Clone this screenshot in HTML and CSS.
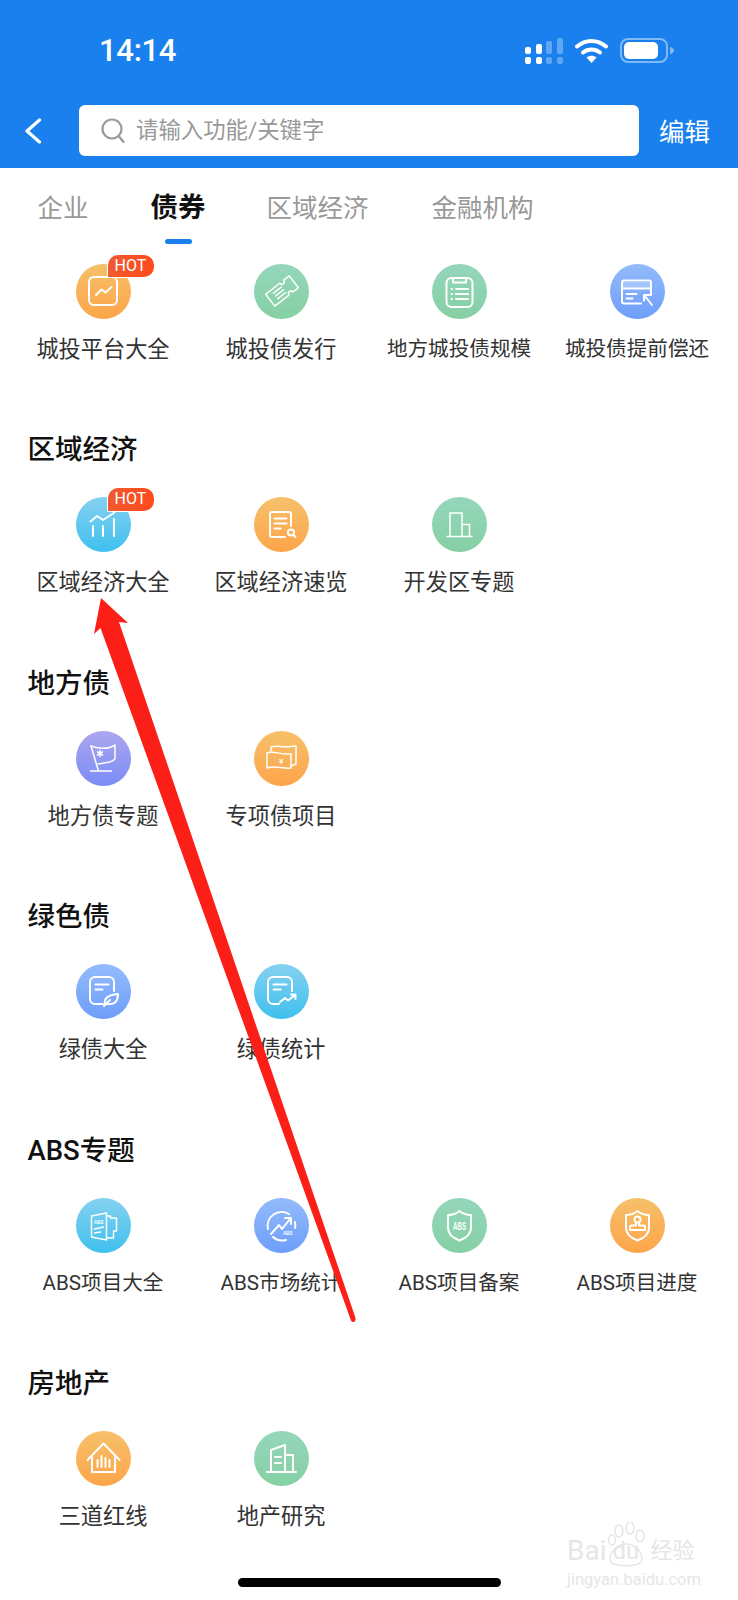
FILE: index.html
```html
<!DOCTYPE html>
<html lang="en">
<head>
  <meta charset="UTF-8">
  <meta name="viewport" content="width=device-width, initial-scale=1.0">
  <title>债券</title>
  <link rel="stylesheet" href="styles.css">
</head>
<body>

<div class="page">
  <header class="header">
    <div class="status-bar">
      <span class="time">14:14</span>
      <div class="status-icons">
        <svg class="signal" width="38" height="26" viewBox="0 0 38 26">
          <rect x="0" y="9" width="6" height="7" rx="2" fill="#fff"/>
          <rect x="0" y="19" width="6" height="7" rx="2" fill="#fff"/>
          <rect x="11" y="6" width="6" height="10" rx="2" fill="#fff"/>
          <rect x="11" y="19" width="6" height="7" rx="2" fill="#fff"/>
          <rect x="21" y="3" width="6" height="13" rx="2" fill="#fff" opacity=".3"/>
          <rect x="21" y="19" width="6" height="7" rx="2" fill="#fff" opacity=".3"/>
          <rect x="32" y="0" width="6" height="16" rx="2" fill="#fff" opacity=".3"/>
          <rect x="32" y="19" width="6" height="7" rx="2" fill="#fff" opacity=".3"/>
        </svg>
        <svg class="wifi" width="33" height="25" viewBox="0 0 33 25">
          <path d="M2 8.500C10.500 1 22.500 1 31 8.500" fill="none" stroke="#fff" stroke-width="4" stroke-linecap="round"/>
          <path d="M8 14.500C13 10.500 20 10.500 25 14.500" fill="none" stroke="#fff" stroke-width="4" stroke-linecap="round"/>
          <path d="M11.500 19.500C14.500 17 18.500 17 21.500 19.500L16.500 25Z" fill="#fff"/>
        </svg>
        <svg class="battery" width="54" height="25" viewBox="0 0 54 25">
          <rect x="1" y="1" width="46" height="23" rx="7" fill="none" stroke="#fff" stroke-opacity=".45" stroke-width="2"/>
          <rect x="4" y="4" width="34" height="17" rx="5" fill="#fff"/>
          <path d="M50 9c2.500 .5 4 2 4 3.500s-1.500 3-4 3.500z" fill="#fff" fill-opacity=".45"/>
        </svg>
      </div>
    </div>
    <div class="nav-bar">
      <svg class="back" width="18" height="26" viewBox="0 0 18 26">
        <path d="M15.500 2L3 13l12.500 11" fill="none" stroke="#fff" stroke-width="3.200" stroke-linecap="round" stroke-linejoin="round"/>
      </svg>
      <div class="search">
        <svg class="search-icon" width="25" height="27" viewBox="0 0 25 27">
          <circle cx="11" cy="12" r="9.500" fill="none" stroke="#999" stroke-width="2.200"/>
          <path d="M18.500 20l4 5" fill="none" stroke="#999" stroke-width="2.200" stroke-linecap="round"/>
        </svg>
        <span class="placeholder">请输入功能/关键字</span>
      </div>
      <span class="edit">编辑</span>
    </div>
  </header>

  <nav class="tabs">
    <span class="tab">企业</span>
    <span class="tab tab-active">债券</span>
    <span class="tab tab-wide">区域经济</span>
    <span class="tab">金融机构</span>
  </nav>

  <section class="section">
    <div class="grid">
      <div class="item">
        <div class="circle orange">
          <svg class="ico" viewBox="0 0 55 55">
            <rect x="13" y="13" width="28" height="28" rx="5"/>
            <path d="M20 31l5.500-5.500 4 3L35.500 23"/>
          </svg>
          <span class="hot">HOT</span>
        </div>
        <span class="label">城投平台大全</span>
      </div>
      <div class="item">
        <div class="circle green">
          <svg class="ico thin" viewBox="0 0 55 55">
            <g transform="rotate(-38 28 27)">
              <path d="M13 19.500h18a2.500 2.500 0 0 0 5 0h7v15h-7a2.500 2.500 0 0 0-5 0H13z"/>
              <path d="M20 23.500h10M20 27h10M20 30.500h10"/>
            </g>
          </svg>
        </div>
        <span class="label">城投债发行</span>
      </div>
      <div class="item">
        <div class="circle green">
          <svg class="ico" viewBox="0 0 55 55">
            <rect x="14.500" y="14" width="26" height="29" rx="5"/>
            <path d="M21 14v4.500h13V14"/>
            <path d="M24 25h12M24 30h12M24 35h12"/>
            <path d="M19.500 25h.5M19.500 30h.5M19.500 35h.5"/>
          </svg>
        </div>
        <span class="label small">地方城投债规模</span>
      </div>
      <div class="item">
        <div class="circle blue">
          <svg class="ico" viewBox="0 0 55 55">
            <path d="M41 31V18.500a2 2 0 0 0-2-2H14a2 2 0 0 0-2 2v19a2 2 0 0 0 2 2h17"/>
            <rect x="13" y="18" width="27" height="6" fill="#fff" fill-opacity=".25" stroke="none"/>
            <path d="M12 24.500h29M16.500 30h10M16.500 34.500h6"/>
            <path d="M34 31h5.500M34 31v5.500M34.500 31.500L42 41"/>
          </svg>
        </div>
        <span class="label small">城投债提前偿还</span>
      </div>
    </div>
  </section>

  <section class="section">
    <h3 class="section-title">区域经济</h3>
    <div class="grid">
      <div class="item">
        <div class="circle cyan">
          <svg class="ico" viewBox="0 0 55 55">
            <path d="M14.500 24.500L21 19l6 4 11.500-7.500"/>
            <path d="M17 29v10M27 29v10M38 22v17"/>
          </svg>
          <span class="hot">HOT</span>
        </div>
        <span class="label">区域经济大全</span>
      </div>
      <div class="item">
        <div class="circle orange">
          <svg class="ico" viewBox="0 0 55 55">
            <path d="M31 40H18a2 2 0 0 1-2-2V17a2 2 0 0 1 2-2h17a2 2 0 0 1 2 2v12"/>
            <path d="M20.500 21.500h12M20.500 26.500h12M20.500 31.500h6"/>
            <circle cx="37" cy="35.500" r="3"/>
            <path d="M39.500 38l2 2"/>
          </svg>
        </div>
        <span class="label">区域经济速览</span>
      </div>
      <div class="item">
        <div class="circle green">
          <svg class="ico thin" viewBox="0 0 55 55">
            <path d="M15 39.500h25M18 39.500V16h12v23.500M30 27.500h7.500v12"/>
          </svg>
        </div>
        <span class="label">开发区专题</span>
      </div>
    </div>
  </section>

  <section class="section">
    <h3 class="section-title">地方债</h3>
    <div class="grid">
      <div class="item">
        <div class="circle purple">
          <svg class="ico thin" viewBox="0 0 55 55">
            <path d="M15 15c7 2.500 16 4 24-1v14c-4 4-10 4-17 5"/>
            <path d="M15 15l7.500 25M14.500 40h21"/>
            <path d="M24 19.500v6M21.500 21l5 3M26.500 21l-5 3"/>
          </svg>
        </div>
        <span class="label">地方债专题</span>
      </div>
      <div class="item">
        <div class="circle orange">
          <svg class="ico thin" viewBox="0 0 55 55">
            <path d="M13 22c7-3 12 2 24 1v14c-9 1-16-3-24 0z"/>
            <path d="M17 20v-4c6-2 12 1 25-1v18l-5 2"/>
            <text class="yen" x="25" y="33">¥</text>
          </svg>
        </div>
        <span class="label">专项债项目</span>
      </div>
    </div>
  </section>

  <section class="section">
    <h3 class="section-title">绿色债</h3>
    <div class="grid">
      <div class="item">
        <div class="circle blue">
          <svg class="ico" viewBox="0 0 55 55">
            <path d="M27 40h-8a5 5 0 0 1-5-5V18a5 5 0 0 1 5-5h14a5 5 0 0 1 5 5v9"/>
            <path d="M19.500 20.500h13M19.500 25.500h7"/>
            <path d="M29 40c-1-6 3-9 13-10 0 7-3 11-11 10zM28 42l6-6"/>
          </svg>
        </div>
        <span class="label">绿债大全</span>
      </div>
      <div class="item">
        <div class="circle cyan">
          <svg class="ico" viewBox="0 0 55 55">
            <path d="M25 40h-6a5 5 0 0 1-5-5V18a5 5 0 0 1 5-5h14a5 5 0 0 1 5 5v9"/>
            <path d="M19.500 20.500h13M19.500 25.500h7"/>
            <path d="M26 38l5-4 3 2.500 7-5.500M37 30.500h4.500V35"/>
          </svg>
        </div>
        <span class="label">绿债统计</span>
      </div>
    </div>
  </section>

  <section class="section">
    <h3 class="section-title">ABS专题</h3>
    <div class="grid">
      <div class="item">
        <div class="circle cyan">
          <svg class="ico thin" viewBox="0 0 55 55">
            <path d="M15.500 18l15-3v27l-15-3z"/>
            <path d="M30.500 18h4v2h6v13h-3v7h-7"/>
            <path d="M18.500 31l9-2M18.500 35l6-1"/>
            <text class="abs-text" x="18" y="26" textLength="9.500" lengthAdjust="spacingAndGlyphs">ABS</text>
          </svg>
        </div>
        <span class="label small">ABS项目大全</span>
      </div>
      <div class="item">
        <div class="circle blue">
          <svg class="ico" viewBox="0 0 55 55">
            <path d="M14 31a14 14 0 0 1 21-15M41 24a14 14 0 0 1 0 6M32 42a14 14 0 0 1-13-3"/>
            <path d="M17 36l8-9 3 4 8-10M31 20h6v6"/>
            <text class="abs-text" x="29" y="37" textLength="9.500" lengthAdjust="spacingAndGlyphs">ABS</text>
          </svg>
        </div>
        <span class="label small">ABS市场统计</span>
      </div>
      <div class="item">
        <div class="circle green">
          <svg class="ico" viewBox="0 0 55 55">
            <path d="M16 17c4 0 8-1 11.500-4 3.500 3 7.500 4 11.500 4v13c0 6-5 10-11.500 12.500C21 40 16 36 16 30z"/>
            <text class="abs-big" x="21" y="31.500" textLength="13" lengthAdjust="spacingAndGlyphs">ABS</text>
          </svg>
        </div>
        <span class="label small">ABS项目备案</span>
      </div>
      <div class="item">
        <div class="circle orange">
          <svg class="ico" viewBox="0 0 55 55">
            <path d="M16 17c4 0 8-1 11.500-4 3.500 3 7.500 4 11.500 4v13c0 6-5 10-11.500 12.500C21 40 16 36 16 30z"/>
            <circle cx="27.500" cy="21.500" r="3"/>
            <path d="M26 24.500v3h-4.500a1.500 1.500 0 0 0-1.500 1.500v3h15v-3a1.500 1.500 0 0 0-1.500-1.500H29v-3"/>
          </svg>
        </div>
        <span class="label small">ABS项目进度</span>
      </div>
    </div>
  </section>

  <section class="section">
    <h3 class="section-title">房地产</h3>
    <div class="grid">
      <div class="item">
        <div class="circle orange">
          <svg class="ico" viewBox="0 0 55 55">
            <path d="M11.500 29L27.500 12.500 43.500 29"/>
            <path d="M16 26v15h23V26"/>
            <path d="M21.500 29v7M25.500 25v11M29.500 27v9M33.500 29v7"/>
          </svg>
        </div>
        <span class="label">三道红线</span>
      </div>
      <div class="item">
        <div class="circle green">
          <svg class="ico" viewBox="0 0 55 55">
            <path d="M13 41h29M17 41V19l14-5v27M31 24h8v17"/>
            <path d="M21 26h6M21 32h6"/>
          </svg>
        </div>
        <span class="label">地产研究</span>
      </div>
    </div>
  </section>

  <div class="home-bar"></div>

  <div class="watermark">
    <div class="wm-logo">
      <span>Bai</span>
      <div class="wm-paw">
        <svg width="40" height="46" viewBox="0 0 40 46">
          <g fill="none" stroke="#e6e6e6" stroke-width="1.500">
            <ellipse cx="13" cy="9" rx="4" ry="6"/>
            <ellipse cx="24" cy="6" rx="4" ry="6"/>
            <ellipse cx="34" cy="14" rx="4" ry="6"/>
            <ellipse cx="6" cy="18" rx="3.500" ry="5"/>
            <path d="M5 40c-4-9 7-18 15-18s19 9 15 18c-4 5-26 5-30 0z"/>
          </g>
        </svg>
        <span class="wm-du">du</span>
      </div>
      <span class="wm-cn">经验</span>
    </div>
    <div class="wm-url">jingyan.baidu.com</div>
  </div>

  <svg class="arrow" width="738" height="1600" viewBox="0 0 738 1600">
    <path d="M101 598L128 623 119 622 355.500 1318Q356 1322 353 1322 351 1322 350.500 1319L100.500 628 94 634Z" fill="#fb1f17"/>
  </svg>
</div>

</body>
</html>
```

FILE: styles.css
```css
* {
  box-sizing: border-box;
}

body {
  margin: 0;
  padding: 0;
  background: #fff;
  color: #333;
  font-family: Roboto, "Noto Sans CJK SC", sans-serif;
}

.page {
  position: relative;
  width: 738px;
  height: 1600px;
  overflow: hidden;
}

.header {
  height: 168px;
  background: #1a80ee;
  color: #fff;
}

.status-bar {
  height: 105px;
  padding: 0 64px 4px 99px;
  display: flex;
  align-items: center;
  justify-content: space-between;
}

.time {
  font-size: 31px;
  font-weight: 500;
  letter-spacing: -0.3px;
}

.status-icons {
  display: flex;
  align-items: center;
  gap: 12px;
}

.nav-bar {
  display: flex;
  align-items: center;
  padding-left: 24px;
}

.back {
  width: 18px;
  margin-right: 37px;
}

.search {
  width: 560px;
  height: 51px;
  padding-left: 22px;
  background: #fff;
  border-radius: 6px;
  display: flex;
  align-items: center;
  gap: 10px;
}

.placeholder {
  padding-bottom: 5px;
  color: #999;
  font-size: 22.4px;
}

.edit {
  margin-left: 20px;
  padding-top: 2px;
  font-size: 25.5px;
  line-height: 30px;
}

.tabs {
  display: flex;
  align-items: flex-start;
  gap: 62px;
  padding: 25px 0 0 37.5px;
  margin-bottom: 19.5px;
}

.tab {
  color: #999;
  font-size: 25.5px;
  line-height: 30px;
}

.tab-wide {
  margin-left: -1px;
  margin-right: 1px;
}

.tab-active {
  color: #111;
  font-size: 27.5px;
  font-weight: 700;
}

.tab-active::after {
  content: "";
  display: block;
  width: 27px;
  height: 5px;
  margin: 16px auto 0;
  background: #1a80ee;
  border-radius: 3px;
}

.section {
  margin-bottom: 68.5px;
}

.section-title {
  margin: 0 0 29px 27.5px;
  color: #111;
  font-size: 27.5px;
  font-weight: 500;
  line-height: 36px;
}

.grid {
  display: grid;
  grid-template-columns: repeat(4, 178px);
  padding-left: 14px;
}

.item {
  display: flex;
  flex-direction: column;
  align-items: center;
  gap: 15px;
}

.circle {
  position: relative;
  width: 55px;
  height: 55px;
  border-radius: 50%;
}

.orange {
  background: linear-gradient(#f6c06a, #fda54a);
}

.green {
  background: linear-gradient(#95d6bb, #85d0a4);
}

.blue {
  background: linear-gradient(#93bbfb, #6e9efa);
}

.cyan {
  background: linear-gradient(#85d1f0, #3fc0ee);
}

.purple {
  background: linear-gradient(#aca6ef, #7a8cf5);
}

.ico {
  display: block;
  width: 55px;
  height: 55px;
  fill: none;
  stroke: #fff;
  stroke-width: 2;
  stroke-linecap: round;
  stroke-linejoin: round;
}

.thin {
  stroke-width: 1.5;
}

.ico text {
  fill: #fff;
  stroke: none;
  font-family: "Liberation Sans", sans-serif;
  font-weight: 700;
}

.ico .yen {
  font-size: 8px;
}

.ico .abs-text {
  font-size: 6px;
}

.ico .abs-big {
  font-size: 11px;
}

.hot {
  position: absolute;
  top: -9px;
  left: 32px;
  width: 46px;
  height: 22.5px;
  background: linear-gradient(to right, #ef5a30, #ff4a1e);
  border-radius: 10px 10px 10px 0;
  box-shadow: 0 0 0 1px #fff;
  color: #fff;
  font-size: 16px;
  line-height: 22.5px;
  text-align: center;
}

.label {
  color: #333;
  font-size: 22.2px;
  line-height: 30px;
  white-space: nowrap;
}

.label.small {
  font-size: 20.6px;
}

.home-bar {
  width: 263px;
  height: 9px;
  margin: -22px auto 0;
  background: #000;
  border-radius: 5px;
}

.watermark {
  position: absolute;
  left: 567px;
  top: 1522px;
  width: 135px;
  color: #e6e6e6;
}

.wm-logo {
  display: flex;
  align-items: flex-end;
  height: 46px;
  font-size: 28px;
  line-height: 34px;
  white-space: nowrap;
}

.wm-paw {
  position: relative;
  flex: none;
  width: 42px;
  height: 46px;
}

.wm-du {
  position: absolute;
  left: 6px;
  bottom: 0;
  font-size: 24px;
}

.wm-cn {
  margin-left: 2px;
  font-size: 22px;
  white-space: nowrap;
}

.wm-url {
  margin-top: 2px;
  font-size: 16.5px;
  line-height: 20px;
  white-space: nowrap;
}

.arrow {
  position: absolute;
  top: 0;
  left: 0;
  pointer-events: none;
}
```
